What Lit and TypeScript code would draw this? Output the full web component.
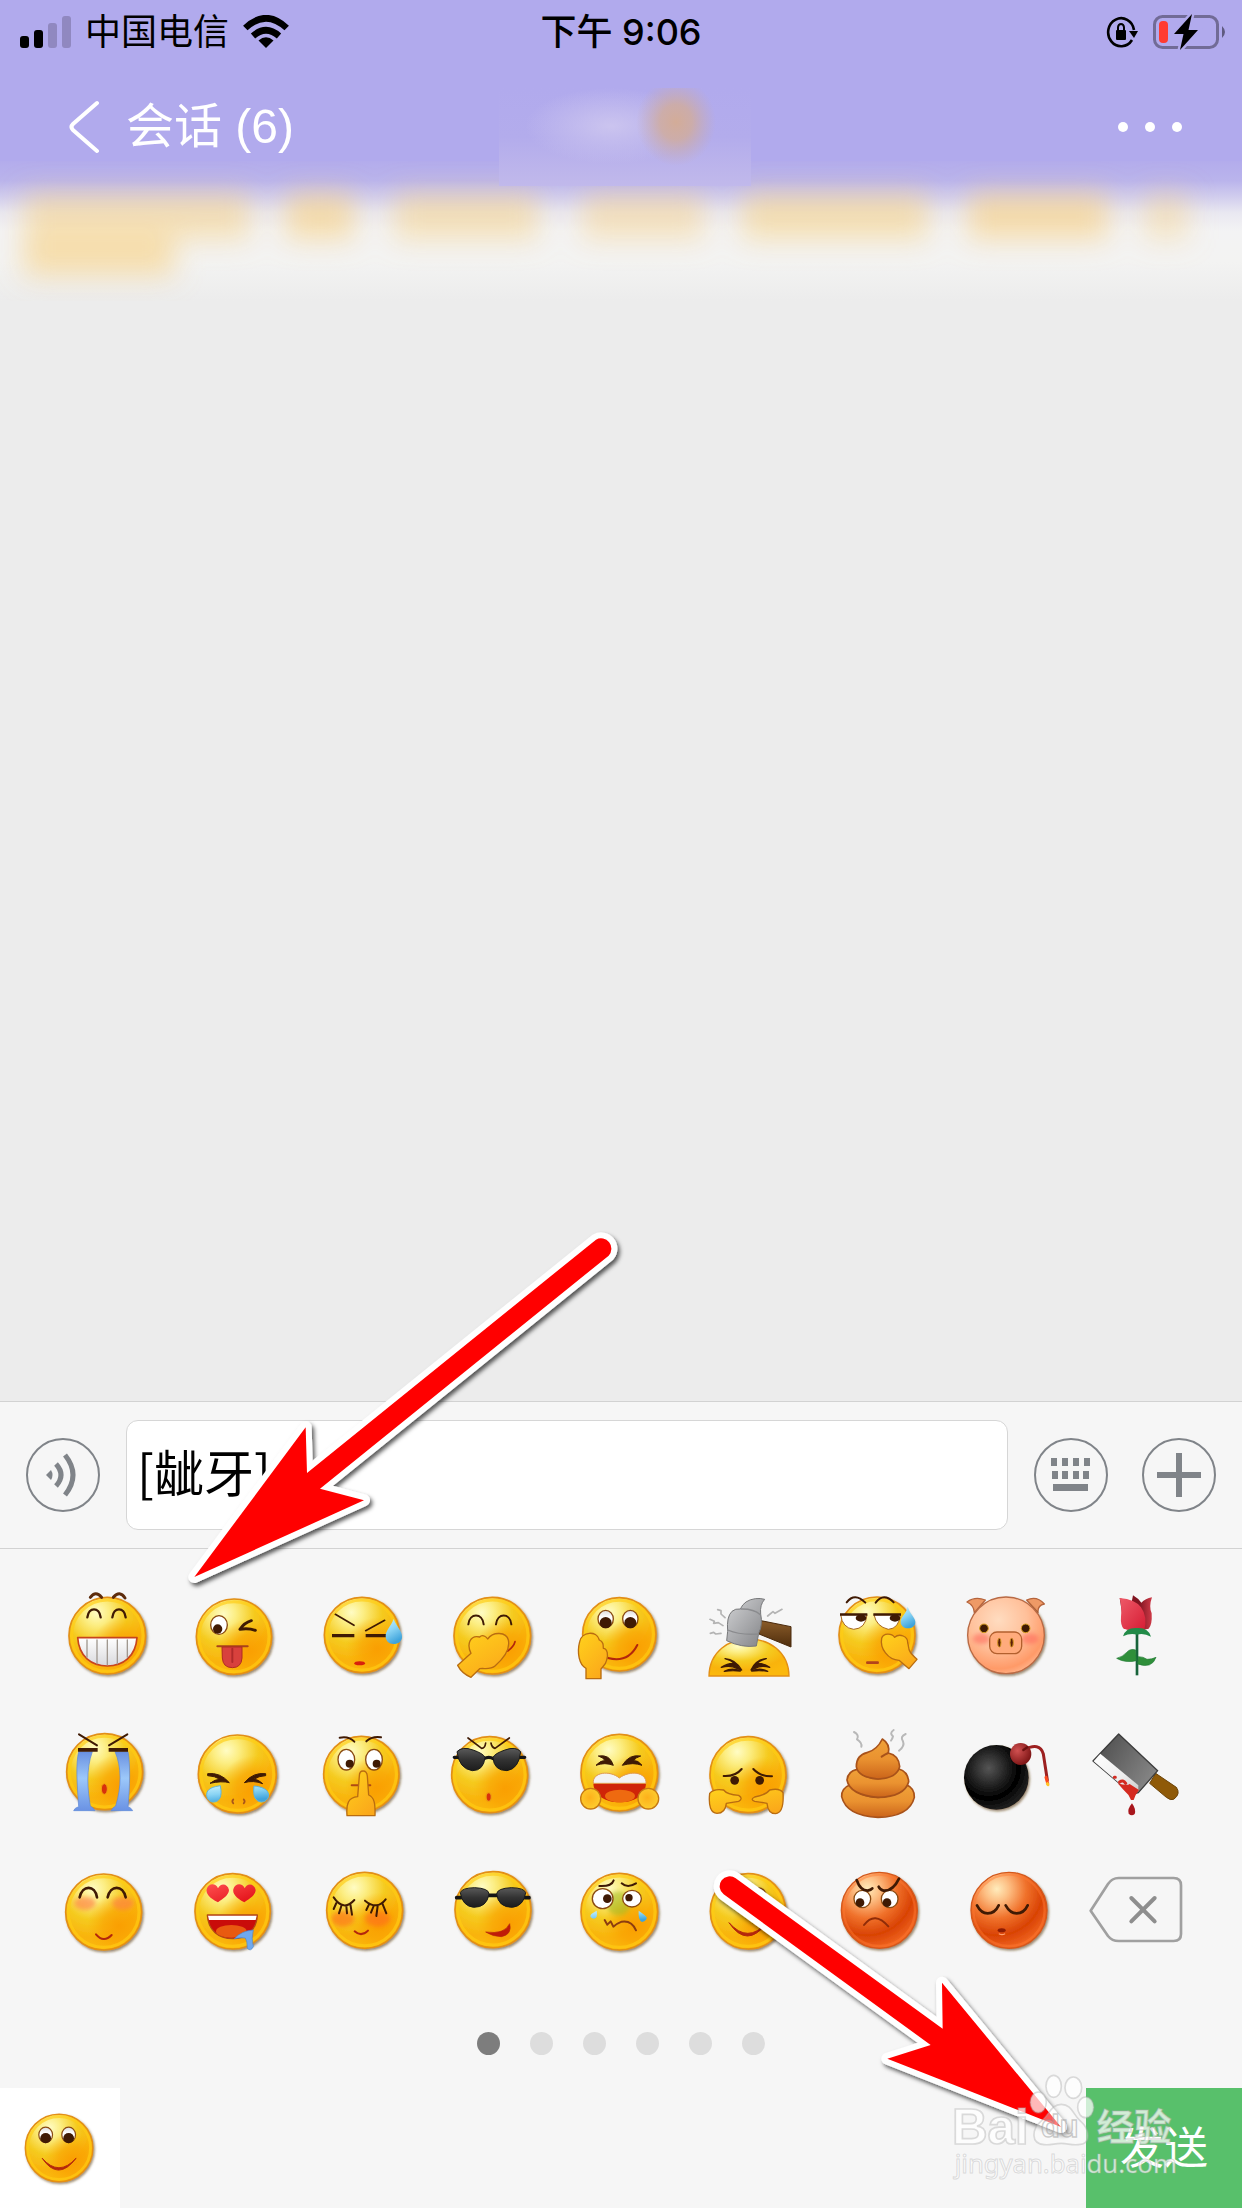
import { LitElement, html, svg, css } from "lit";
import { customElement, state } from "lit/decorators.js";

const INK = "#3f1a04";
const RED = "#b3260c";

const line = (d: string, w = 5, c = INK) =>
  svg`<path d=${d} fill="none" stroke=${c} stroke-width=${w + 1} stroke-linecap="round" stroke-linejoin="round"/>`;
const shape = (d: string, fill: string, stroke = "none", w = 4) =>
  svg`<path d=${d} fill=${fill} stroke=${stroke} stroke-width=${w} stroke-linejoin="round"/>`;
const oval = (x: number, y: number, rx: number, ry: number, fill: string, stroke = "none", w = 4) =>
  svg`<ellipse cx=${x} cy=${y} rx=${rx} ry=${ry} fill=${fill} stroke=${stroke} stroke-width=${w}/>`;
const eye = (x: number, y: number, rx: number, ry: number, px: number, py: number, pr = 12) =>
  svg`${oval(x, y, rx, ry, "#fff", "#8a4a10", 4)}${oval(px, py, pr, pr, INK)}`;
const lookEye = (x: number, y: number) =>
  svg`${oval(x, y, 23, 26, "url(#white)", "#8a4a10", 4)}${oval(x, y + 11, 18, 17, INK)}`;
const blush = (x: number, y: number, rx: number, ry: number, fill = "#ff7a4a") =>
  svg`<ellipse cx=${x} cy=${y} rx=${rx} ry=${ry} fill=${fill} opacity="0.6" filter="url(#soft)"/>`;

const ball = (x: number, y: number, r = 115) => svg`
  <circle cx=${x} cy=${y} r=${r - 2} fill="url(#skin)" stroke="#e38f14" stroke-width="5" filter="url(#drop-shade)"/>
  <circle cx=${x} cy=${y} r=${r - 4} fill="url(#warm)"/>
  <circle cx=${x} cy=${y} r=${r - 10} fill="none" stroke="#ffcc14" stroke-width="9" opacity="0.65"/>`;
const redBall = (x: number, y: number, r = 116) => svg`
  <circle cx=${x} cy=${y} r=${r - 2} fill="url(#anger)" stroke="#d4581c" stroke-width="4" filter="url(#drop-shade)"/>
  <circle cx=${x} cy=${y} r=${r - 9} fill="none" stroke="#ff7a34" stroke-width="7" opacity="0.45"/>`;
const HAND = "#b96c10";

const smile = svg`${ball(953, 1024)}${lookEye(908, 980)}${lookEye(985, 980)}
  ${shape("M896 1058Q950 1138 1010 1058Q952 1122 896 1058Z", RED, RED, 3)}`;

interface Emoji { name: string; box: string; art: unknown; }

const COLS = [55, 441, 827, 43, 429, 815, 61, 447, 833];
const ROWS = [51, 465, 879];

const art: [string, unknown][] = [
  ["龇牙", svg`${ball(203, 197, 117)}
    ${line("M152 82Q168 60 186 82M221 82Q240 60 256 84", 8, "#5d2c0c")}
    ${line("M143 142C147 110 179 110 183 142M218 142C222 110 254 110 258 142", 6)}
    ${shape("M114 203H292C288 260 250 288 203 288C155 288 118 260 114 203Z", "url(#teeth)", "#c8441c", 5)}
    ${line("M142 210V262M172 210V281M203 210V284M233 210V281M263 210V262", 3, "#a09890")}`],
  ["调皮", svg`${ball(582, 200)}${eye(537, 165, 25, 28, 533, 177, 14)}
    ${line("M634 152Q613 158 600 178Q625 174 646 181", 8)}${line("M532 229H623", 5, "#a8431a")}
    ${shape("M546 231H606V264Q604 293 577 293Q549 293 547 264Z", "#d8413d", "#b02a22", 3)}${line("M577 236V276", 5, "#b02a2a")}`],
  ["流汗", svg`${ball(965, 195)}${line("M885 133L941 166M1033 151L976 182", 4)}
    ${shape("M875 192H942V202H875ZM976 192H1040V202H976Z", INK)}${oval(958, 280, 16, 6, "#d8200c")}
    ${shape("M1060 147C1070 172 1085 182 1085 200C1085 214 1074 222 1060 222C1046 222 1036 213 1036 198C1036 182 1051 170 1060 147Z", "url(#water)")}`],
  ["偷笑", svg`${ball(188, 197, 117)}${line("M116 163C120 128 158 128 162 163M199 163C203 128 241 128 245 163", 5)}
    ${line("M234 243Q252 230 256 215", 4, RED)}
    ${shape("M84 286L124 250C110 222 122 194 150 201C160 190 172 204 174 207C190 184 230 185 236 210C243 240 222 265 196 288C182 300 165 294 150 296L124 322C108 315 92 302 84 286Z", "url(#hand)", HAND)}`],
  ["再见", svg`${ball(568, 193, 112)}${lookEye(527, 147)}${lookEye(601, 147)}${line("M534 264Q594 280 622 225", 5, RED)}
    ${shape("M468 326V295C448 285 440 250 449 215C455 185 500 180 508 210C520 215 520 225 520 235C533 235 535 258 530 270C528 285 515 293 513 297V326Z", "url(#hand)", HAND)}`],
  ["敲打", svg`<path d="M836 318C838 170 1074 170 1076 318Z" fill="url(#skin)" stroke="#e38f14" stroke-width="4"/>
    ${shape("M884 266Q915 268 934 300L920 295Q900 285 873 292Q895 278 914 281Q900 270 884 266ZM882 304Q905 292 930 303Q905 300 882 304Z", INK, INK, 4)}
    ${shape("M1008 266Q977 268 962 300L974 295Q992 285 1018 292Q998 278 978 281Q992 270 1008 266ZM1012 304Q990 292 964 303Q990 300 1012 304Z", INK, INK, 4)}
    ${shape("M992 152L1082 170V231L986 192Z", "url(#wood)", "#4a2a0c", 3)}
    ${shape("M930 117Q942 90 975 86Q990 84 1003 88Q988 104 991 132Q998 165 985 190L978 228Q935 234 889 212L892 184Q888 140 905 124Q915 115 930 117Z", "url(#steel)", "#77787a", 3)}
    ${line("M892 180Q930 196 984 192M932 117Q970 116 990 134", 3, "#8a8b8e")}
    ${line("M862 119L872 122L872 132L884 143M839 148L852 154L850 160L864 158L878 167M840 190L850 187L856 192L872 190M1012 138L1028 125L1034 130L1055 118", 4, "#b4b4b4")}`],
  ["擦汗", svg`${ball(202, 195, 116)}${line("M111 97Q135 66 167 98M198 98Q222 66 252 97", 5)}
    ${shape("M93 134H172Q168 176 132 178Q98 174 93 134Z", "#fff", "#a8671a", 3)}${shape("M193 134H272Q268 176 236 178Q200 170 193 134Z", "#fff", "#a8671a", 3)}
    ${oval(154, 144, 16, 11, INK)}${oval(256, 144, 16, 11, INK)}${shape("M91 130H173V137H91ZM191 130H274V137H191Z", INK)}
    ${shape("M294 110C302 135 317 142 317 156C317 168 307 175 295 175C282 175 273 167 273 155C273 140 289 133 294 110Z", "url(#water)")}
    ${line("M173 278H204", 7, "#b3441a")}
    ${shape("M322 268L298 296L268 271C235 270 210 235 216 205C222 188 246 190 255 202C270 188 295 200 294 218C300 236 290 240 322 268Z", "url(#hand)", HAND)}`],
  ["猪头", svg`${shape("M526 90Q495 78 471 96Q492 106 493 128ZM650 90Q680 76 703 102Q682 106 684 128Z", "#ee9a66", "#b5643c", 4)}
    <circle cx="588" cy="196" r="115" fill="url(#pig)" stroke="#b96a44" stroke-width="4" filter="url(#drop-shade)"/>
    ${blush(514, 206, 26, 16, "#ff6a5c")}${blush(660, 206, 26, 16, "#ff6a5c")}
    ${oval(522, 175, 13, 13, INK, "#d9a020", 3)}${oval(647, 175, 13, 13, INK, "#d9a020", 3)}
    <rect x="539" y="186" width="96" height="65" rx="22" fill="#ffab7c" stroke="#b3602e" stroke-width="4"/>
    ${oval(568, 218, 5, 13, "#5a1e08", "#d99a20", 3)}${oval(605, 218, 5, 13, "#5a1e08", "#d99a20", 3)}`],
  ["玫瑰", svg`${shape("M976 190H984V316H976Z", "#17633a")}
    ${shape("M928 84Q950 92 964 96L968 76Q985 86 993 98Q1005 86 1025 82Q1015 110 1024 130Q1026 165 1015 176Q980 186 942 176Z", "url(#rosedark)")}
    ${shape("M928 84Q975 88 992 112Q1012 140 1002 180Q970 186 940 176Q930 165 932 140Q935 110 928 84Z", "url(#rose)")}
    ${shape("M938 199Q946 172 980 174Q1014 172 1022 200Q1000 188 980 194Q960 188 938 199Z", "#228b48")}
    ${shape("M978 272Q945 280 919 265Q938 260 948 248Q960 234 976 240ZM984 260Q1000 260 1010 268Q1025 268 1037 262Q1025 297 982 282Z", "#2f8f3a", "#1f7a34", 2)}`],
  ["大哭", svg`${ball(195, 605, 116)}
    ${shape("M117 545H158C138 600 144 660 152 708Q162 714 166 722H102Q104 714 117 710C112 640 108 580 117 545Z", "url(#tears)", "#5a86d8", 2)}
    ${shape("M226 545H265C272 580 271 650 265 710Q276 714 279 722H214Q220 712 228 708C246 650 246 590 226 545Z", "url(#tears)", "#5a86d8", 2)}
    ${shape("M115 534H174V545H115ZM207 534H265V545H207Z", INK)}${line("M118 493L172 526M263 493L208 526", 5)}
    ${oval(194, 657, 9, 16, "#d8300c", "#f0a010", 3)}`],
  ["流泪", svg`${ball(592, 612, 119)}
    ${shape("M503 611Q540 606 568 638Q545 632 510 640Q525 628 540 628Q525 618 503 617ZM677 611Q640 606 613 638Q640 630 668 641Q655 628 642 628Q655 618 677 617Z", INK, INK, 3)}
    ${shape("M541 647C522 650 500 655 500 674C500 688 510 696 520 696C538 696 548 680 541 647ZM642 648C665 650 686 658 686 676C684 690 674 696 664 696C646 694 638 678 642 648Z", "url(#water)", "#5fb4dc", 3)}
    ${line("M580 688Q574 694 580 700M611 688Q617 694 611 700", 4, "#a8551a")}`],
  ["嘘", svg`${ball(963, 612, 115)}${line("M898 503Q925 497 942 515M978 514Q995 498 1022 502", 5)}
    ${eye(918, 569, 25, 31, 928, 581)}${eye(1001, 569, 25, 31, 1009, 581)}${line("M934 646H990", 5, "#b04a14")}
    ${shape("M957 618C957 598 979 598 981 618L985 675C1002 682 1005 700 1004 737H920C917 700 925 682 952 680Z", "url(#hand)", HAND)}`],
  ["酷拽", svg`${ball(180, 614, 116)}${line("M115 504L156 535Q166 535 168 519M239 504L196 535Q186 532 184 519", 4)}
    ${line("M74 562H88M163 566Q177 558 192 566M270 562H285", 9, "#151515")}
    ${shape("M82 545Q98 528 130 540Q160 550 166 562Q162 602 128 602Q88 596 82 545ZM273 545Q258 528 226 540Q196 550 190 562Q192 602 232 602Q268 596 273 545Z", "url(#shades)", "#1a1a1a", 3)}
    ${oval(177, 681, 8, 13, "#d8300c", "#f0a010", 4)}`],
  ["大叫", svg`${ball(568, 608, 117)}
    ${shape("M505 558Q540 552 550 586Q525 576 498 586Q512 570 526 572Q518 562 505 558ZM632 558Q597 552 577 586Q610 576 636 586Q624 570 610 572Q618 562 632 558Z", INK, INK, 3)}
    ${shape("M490 640H648C646 680 610 697 568 697C530 697 492 680 490 640Z", "#cf2408")}${oval(570, 678, 45, 19, "#ee6a10")}
    ${shape("M490 640C486 606 540 600 568 624C600 600 650 606 648 640Z", "#f3f3f3", "#e09a50", 3)}
    ${oval(482, 686, 30, 31, "url(#fist)", "#c67812", 4)}${oval(655, 686, 31, 31, "url(#fist)", "#c67812", 4)}`],
  ["对手指", svg`${ball(953, 614, 116)}${line("M880 618Q915 620 934 597M969 597Q990 620 1025 619", 5)}
    ${oval(913, 631, 13, 13, INK)}${oval(988, 631, 13, 13, INK)}
    ${shape("M838 670Q850 655 880 660Q890 674 925 676Q940 686 925 694Q905 697 888 700Q885 730 860 730Q832 728 838 670ZM1058 668Q1048 653 1018 660Q1008 674 973 681Q958 688 973 694Q996 697 1010 700Q1013 731 1036 731Q1062 728 1058 668Z", "url(#hand)", HAND)}`],
  ["便便", svg`${shape("M96 680Q95 655 120 645Q150 682 205 682Q265 680 292 645Q315 655 314 682Q300 740 205 742Q110 738 96 680Z", "url(#poo)", "#a8521a", 5)}
    ${shape("M112 630Q115 603 142 598Q165 627 205 627Q250 622 268 597Q295 605 297 635Q285 680 205 682Q120 675 112 630Z", "url(#poo)", "#a8521a", 5)}
    ${shape("M140 590Q140 556 172 548Q202 540 218 507Q242 522 236 549Q268 556 270 590Q262 625 205 627Q145 622 140 590Z", "url(#poo)", "#a8521a", 5)}
    ${line("M236 549Q228 552 216 560", 5, "#a8521a")}
    ${line("M133 486Q150 495 142 508Q158 518 155 530M252 480Q238 490 250 499Q248 508 244 512M288 492Q270 500 280 514Q286 528 268 542", 5, "#b8b8b8")}`],
  ["炸弹", svg`<circle cx="559" cy="622" r="97" fill="url(#bomb)" filter="url(#drop-shade)"/>
    ${line("M640 540Q690 514 700 552L712 630", 8, "#9c2020")}${line("M708 622L713 640", 8, "#ff4a1c")}${line("M712 641L714 644", 8, "#ffc42a")}
    ${oval(632, 552, 32, 33, "url(#cap)")}${line("M640 540L652 532", 6, "#6d1010")}`],
  ["菜刀", svg`${shape("M1036 610L1098 652Q1112 672 1090 688Q1080 692 1068 682L1018 640Z", "#8f5a08", "#6b4206", 3)}
    ${shape("M925 492L1042 602L984 668L966 673L848 573Z", "url(#blade)", "#3c3c3c", 4)}
    ${shape("M870 551L984 646L984 664L966 673L850 574Z", "url(#edge)")}
    ${shape("M922 640Q950 648 958 642L986 660Q976 672 970 690H962Q955 672 940 660Z", "#d42a20")}
    ${line("M912 622H915M928 636Q938 628 946 640", 8, "#d42a20")}
    ${shape("M965 700Q978 718 973 732Q964 740 955 731Q950 718 965 700Z", "#a8161c")}`],
  ["愉快", svg`${ball(192, 1026, 116)}${blush(136, 1000, 32, 20)}${blush(250, 1000, 32, 20)}
    ${line("M120 982C128 944 166 944 172 982M204 982C212 944 250 944 258 982", 7)}${line("M169 1093Q192 1120 216 1095", 5, RED)}`],
  ["色", svg`${ball(578, 1024)}
    ${shape("M534 997C508 985 497 970 500 958C505 938 528 938 534 955C541 938 563 940 567 960C566 976 550 985 534 997ZM613 997C588 985 577 970 580 958C585 938 608 938 614 955C621 938 643 940 647 960C646 976 630 985 613 997Z", "url(#heart)")}
    ${shape("M502 1035H652C650 1080 620 1106 578 1106C535 1106 504 1080 502 1035Z", "#c90c0a", "#b04a14", 4)}
    ${oval(574, 1084, 46, 19, "#e85a10")}${shape("M504 1037H650L647 1050H507Z", "#fff")}
    ${shape("M583 1106Q605 1082 640 1080Q633 1105 640 1130Q632 1146 622 1135Q622 1112 616 1104Q600 1102 583 1106Z", "#6fa9ee", "#4a86d0", 2)}`],
  ["害羞", svg`${ball(973, 1021, 116)}${blush(908, 1046, 34, 24, "#ff6a1a")}${blush(1012, 1046, 38, 24, "#ff6a1a")}
    ${line("M880 982Q910 1026 942 990M888 999L880 1017M903 1008L896 1030M918 1008L920 1030M930 1002L935 1034M974 992Q1010 1022 1036 988M986 1003L978 1020M1000 1008L992 1028M1012 1008L1008 1038M1026 1000L1038 1030", 5)}
    ${line("M943 1084Q963 1102 983 1082", 5, RED)}`],
  ["得意", svg`${ball(190, 1019, 116)}${line("M81 983H94M176 976H202M286 983H298", 10, "#151515")}
    ${shape("M92 968Q96 954 135 953Q178 955 178 972Q172 1012 132 1012Q98 1008 92 968ZM288 968Q284 954 245 953Q202 955 201 972Q206 1012 248 1012Q282 1008 288 968Z", "url(#shades)", "#1a1a1a", 3)}
    ${shape("M168 1086Q225 1094 240 1061Q248 1094 215 1100Q190 1100 168 1086Z", "#c01c08", RED, 2)}`],
  ["难过", svg`${ball(568, 1025, 117)}${blush(566, 1000, 36, 36, "#a3ba20")}
    ${line("M508 948Q545 950 551 931M575 940Q592 956 618 940", 5)}
    ${eye(518, 986, 31, 30, 532, 986, 13)}${eye(606, 986, 28, 25, 597, 983, 11)}
    ${shape("M500 1022Q505 1046 490 1046Q476 1042 484 1032ZM626 1022Q624 1050 636 1056Q652 1052 650 1042Q645 1034 626 1022Z", "url(#water)")}
    ${line("M524 1050L532 1064L542 1054L550 1070Q562 1060 575 1055Q605 1050 618 1081", 5, "#8c3c10")}`],
  ["微笑", smile],
  ["发怒", svg`${redBall(209, 1021)}
    ${eye(158, 987, 25, 26, 151, 998, 13)}${eye(240, 987, 25, 26, 232, 998, 13)}
    ${line("M141 930Q152 962 174 962Q184 960 188 955M268 926Q250 964 222 962Q210 958 207 950", 7)}${line("M163 1065Q195 1022 236 1069", 5, "#8f2c08")}`],
  ["闭嘴", svg`${redBall(597, 1021)}${line("M501 1006Q513 1030 533 1030Q555 1030 566 1006M587 1006Q600 1030 620 1030Q642 1030 653 1006", 7)}
    ${oval(575, 1081, 12, 6, "#8c1c04")}${line("M568 1092Q576 1096 584 1092", 3, "#ffa070")}`],
];

const EMOJIS: Emoji[] = art.map(([name, drawing], i) => {
  const row = i < 9 ? 0 : i < 18 ? 1 : 2;
  return { name, art: drawing, box: `${COLS[i - row * 9]} ${ROWS[row]} 288 288` };
});

@customElement("app-root")
export class AppRoot extends LitElement {
  @state() private draft = "[龇牙]";
  @state() private page = 0;

  static styles = css`
    :host { display: block; font-family: Inter, "Noto Sans CJK SC", sans-serif; }
    * { box-sizing: border-box; }
    svg { display: block; flex: none; }
    button { border: 0; padding: 0; margin: 0; background: none; font: inherit; color: inherit; }
    .screen { display: flex; flex-direction: column; min-height: 100vh; background: #ececec; overflow: hidden; }
    .top { position: relative; background: #b1aaed; }
    .status { display: grid; grid-template-columns: 1fr auto 1fr; align-items: center; height: 64px; padding: 0 16px; font-size: 36px; line-height: 36px; color: #000; }
    .carrier { display: flex; align-items: center; gap: 14px; padding-left: 4px; }
    .time { font-weight: 500; }
    .power { display: flex; align-items: center; justify-content: flex-end; gap: 14px; }
    .nav { position: relative; z-index: 1; display: flex; align-items: center; justify-content: space-between; height: 126px; padding: 0 59px 0 68px; color: #fff; }
    .back { display: flex; align-items: center; gap: 26px; font-family: "Liberation Sans", "Noto Sans CJK SC", sans-serif; font-size: 48px; line-height: 56px; text-decoration: none; color: #fff; }
    .haze { position: absolute; left: 0; top: 161px; width: 100%; height: 140px; }
    .smudge { position: absolute; left: 50%; top: 88px; width: 252px; height: 98px; margin-left: -122px; }
    .chat { flex: 1; }
    .dock { position: relative; background: #f6f6f6; }
    .composer { display: flex; align-items: center; height: 148px; padding: 0 26px; border-top: 1px solid #d2d2d2; border-bottom: 1px solid #d2d2d2; }
    .draft { flex: 1; min-width: 0; height: 110px; margin: 0 26px; padding: 0 10px 10px; border: 1px solid #d6d6d6; border-radius: 12px; background: #fff; font-family: "Noto Sans CJK SC", sans-serif; font-size: 50px; color: #000; outline: 0; }
    .tools { display: flex; gap: 34px; }
    .grid { display: grid; grid-template-columns: repeat(9, 1fr); grid-auto-rows: 138px; padding: 17px 42px 0; }
    .cell { display: grid; place-items: center; }
    .pages { display: flex; justify-content: center; gap: 30px; padding: 52px 0 33px; }
    .dot { width: 23px; height: 23px; border-radius: 50%; background: #dddddd; }
    .dot.on { background: #7d7d7d; }
    .tabs { display: flex; justify-content: space-between; height: 120px; }
    .tab { display: grid; place-items: center; width: 120px; background: #fff; }
    .send { width: 156px; background: #58c06b; color: #fff; font-size: 44px; line-height: 60px; }
    .overlay { position: absolute; pointer-events: none; overflow: visible; }
    .from-chat { left: 160px; top: -191px; }
    .to-send { right: 142px; bottom: 58px; }
    .mark { right: 0; bottom: 0; }
    .mark-en { font-family: "Liberation Sans", sans-serif; font-weight: 700; font-size: 148px; }
    .mark-du { font-family: "Liberation Sans", sans-serif; font-weight: 700; font-size: 92px; }
    .mark-zh { font-family: "Noto Sans CJK SC", sans-serif; font-weight: 700; font-size: 112px; }
    .mark-url { font-family: "Noto Sans", sans-serif; font-size: 77px; }
  `;

  private defs() {
    return html`<svg width="0" height="0" class="overlay" aria-hidden="true"><defs>
      <radialGradient id="skin" cx="0.36" cy="0.2" r="0.8"><stop offset="0" stop-color="#fffcc4"/><stop offset="0.2" stop-color="#fcee84"/><stop offset="0.5" stop-color="#f5cb20"/><stop offset="0.8" stop-color="#f9b30c"/><stop offset="1" stop-color="#fbb80c"/></radialGradient>
      <radialGradient id="warm" cx="0.7" cy="0.68" r="0.42"><stop offset="0" stop-color="#fa9c00" stop-opacity="0.9"/><stop offset="0.5" stop-color="#fa9f00" stop-opacity="0.6"/><stop offset="1" stop-color="#fba800" stop-opacity="0"/></radialGradient>
      <radialGradient id="anger" cx="0.34" cy="0.22" r="0.8"><stop offset="0" stop-color="#ffecbc"/><stop offset="0.2" stop-color="#fdbf84"/><stop offset="0.48" stop-color="#f0722c"/><stop offset="0.76" stop-color="#d94304"/><stop offset="1" stop-color="#f06420"/></radialGradient>
      <radialGradient id="pig" cx="0.4" cy="0.3" r="0.75"><stop offset="0" stop-color="#ffdcc0"/><stop offset="0.5" stop-color="#ffc09a"/><stop offset="0.85" stop-color="#ff9a68"/><stop offset="1" stop-color="#ffb890"/></radialGradient>
      <radialGradient id="bomb" cx="0.38" cy="0.36" r="0.62"><stop offset="0" stop-color="#555"/><stop offset="0.5" stop-color="#1c1c1c"/><stop offset="0.75" stop-color="#000"/><stop offset="1" stop-color="#1a1a1a"/></radialGradient>
      <radialGradient id="cap" cx="0.35" cy="0.35" r="0.7"><stop offset="0" stop-color="#d05050"/><stop offset="1" stop-color="#7c1414"/></radialGradient>
      <radialGradient id="fist" cx="0.45" cy="0.45" r="0.6"><stop offset="0" stop-color="#fdb01a"/><stop offset="1" stop-color="#fdcf30"/></radialGradient>
      <linearGradient id="hand" x1="0" y1="0" x2="0.7" y2="1"><stop offset="0" stop-color="#ffd21c"/><stop offset="1" stop-color="#fba91a"/></linearGradient>
      <linearGradient id="teeth" x1="0" y1="0" x2="0" y2="1"><stop offset="0" stop-color="#fff"/><stop offset="1" stop-color="#d9d9dd"/></linearGradient>
      <linearGradient id="white" x1="0" y1="0" x2="0" y2="1"><stop offset="0" stop-color="#ddd"/><stop offset="0.4" stop-color="#fff"/></linearGradient>
      <linearGradient id="water" x1="0" y1="0" x2="0.4" y2="1"><stop offset="0" stop-color="#c8f0fc"/><stop offset="0.5" stop-color="#8ad4f4"/><stop offset="1" stop-color="#3fa4dc"/></linearGradient>
      <linearGradient id="tears" x1="0" y1="0" x2="0" y2="1"><stop offset="0" stop-color="#6a90e0"/><stop offset="0.45" stop-color="#9cc8fa"/><stop offset="1" stop-color="#6a92e4"/></linearGradient>
      <linearGradient id="shades" x1="0" y1="0" x2="0" y2="1"><stop offset="0" stop-color="#5a5a5a"/><stop offset="0.5" stop-color="#333"/><stop offset="1" stop-color="#1c1c1c"/></linearGradient>
      <linearGradient id="steel" x1="0" y1="0" x2="1" y2="1"><stop offset="0" stop-color="#d2d3d5"/><stop offset="0.6" stop-color="#a2a3a6"/><stop offset="1" stop-color="#808184"/></linearGradient>
      <linearGradient id="wood" x1="0" y1="0" x2="0" y2="1"><stop offset="0" stop-color="#8a5c2a"/><stop offset="1" stop-color="#4f2d0c"/></linearGradient>
      <linearGradient id="poo" x1="0" y1="0" x2="0" y2="1"><stop offset="0" stop-color="#f0a238"/><stop offset="0.5" stop-color="#ea9230"/><stop offset="1" stop-color="#cb641a"/></linearGradient>
      <linearGradient id="blade" x1="0" y1="0" x2="1" y2="0.6"><stop offset="0" stop-color="#484848"/><stop offset="1" stop-color="#858585"/></linearGradient>
      <linearGradient id="edge" x1="0" y1="0" x2="1" y2="1"><stop offset="0" stop-color="#fff"/><stop offset="0.6" stop-color="#eee"/><stop offset="1" stop-color="#c9c9c9"/></linearGradient>
      <linearGradient id="rose" x1="0" y1="0" x2="1" y2="1"><stop offset="0" stop-color="#ee5a68"/><stop offset="1" stop-color="#d61c34"/></linearGradient>
      <linearGradient id="rosedark" x1="0" y1="0" x2="1" y2="0"><stop offset="0" stop-color="#8c1420"/><stop offset="0.6" stop-color="#7e1420"/><stop offset="1" stop-color="#d03a48"/></linearGradient>
      <linearGradient id="heart" x1="0" y1="0" x2="1" y2="1"><stop offset="0" stop-color="#ff5050"/><stop offset="1" stop-color="#e00c14"/></linearGradient>
      <filter id="drop-shade" x="-20%" y="-20%" width="140%" height="140%"><feDropShadow dx="4" dy="5" stdDeviation="3" flood-color="#5a3a10" flood-opacity="0.6"/></filter>
      <filter id="soft" x="-50%" y="-50%" width="200%" height="200%"><feGaussianBlur stdDeviation="7"/></filter>
      <filter id="arrow-shade" x="-10%" y="-10%" width="120%" height="120%"><feDropShadow dx="7" dy="9" stdDeviation="6" flood-color="#000" flood-opacity="0.65"/></filter>
    </defs></svg>`;
  }

  private statusBar() {
    return html`<div class="status">
      <div class="carrier">
        <svg width="51" height="32" viewBox="0 0 51 32" aria-hidden="true">
          <rect y="20" width="9" height="12" rx="3"/><rect x="14" y="14" width="9" height="18" rx="3"/>
          <g fill="#9088c0"><rect x="28" y="7" width="9" height="25" rx="3"/><rect x="42" width="9" height="32" rx="3"/></g>
        </svg>
        <span>中国电信</span>
        <svg width="46" height="34" viewBox="0 0 46 34" aria-hidden="true">
          <path d="M23 33L15.500 25.500Q23 19 30.500 25.500Z"/>
          <g fill="none" stroke="#000" stroke-width="6.500"><path d="M10 21Q23 9.500 36 21"/><path d="M2.300 13Q23-6.500 43.700 13"/></g>
        </svg>
      </div>
      <span class="time">下午 9:06</span>
      <div class="power">
        <svg width="32" height="32" viewBox="0 0 32 32" aria-hidden="true">
          <path d="M28 14A13 14 0 1 0 26 24" fill="none" stroke="#000" stroke-width="2.600"/>
          <path d="M23 15H32L28 22Z"/><rect x="10" y="14" width="10" height="10" rx="1"/>
          <path d="M12 15V11.500A3 3.500 0 0 1 18 11.500V15" fill="none" stroke="#000" stroke-width="2"/>
        </svg>
        <svg width="74" height="36" viewBox="0 0 74 36" aria-hidden="true">
          <rect x="2.500" y="2.500" width="63" height="31" rx="8" fill="none" stroke="#716b96" stroke-width="3"/>
          <path d="M70 12Q76 18 70 24Z" fill="#5f5a80"/>
          <rect x="7" y="7" width="9" height="22" rx="4" fill="#ff3b30"/>
          <path d="M40 0L22 20H31.500L28 36L46 16H36.500Z" stroke="#b1aaed" stroke-width="5" paint-order="stroke"/>
        </svg>
      </div>
    </div>`;
  }

  private notice() {
    const words: [number, number, number][] = [[24, 226, 0.52], [286, 68, 0.6], [394, 144, 0.5], [582, 122, 0.45], [742, 186, 0.55], [968, 140, 0.62], [1144, 44, 0.42]];
    return html`<svg class="haze" viewBox="0 0 1242 140" preserveAspectRatio="none" aria-hidden="true">
      <defs>
        <linearGradient id="fade" x1="0" y1="0" x2="0" y2="1">
          <stop offset="0" stop-color="#b3acec"/><stop offset="0.14" stop-color="#bab4ec"/><stop offset="0.26" stop-color="#d2ceee"/><stop offset="0.37" stop-color="#e9e8f1"/><stop offset="0.5" stop-color="#f3f3f4"/><stop offset="0.72" stop-color="#f3f3f2"/><stop offset="1" stop-color="#ececec"/>
        </linearGradient>
        <filter id="smear" x="-60%" y="-60%" width="220%" height="220%"><feGaussianBlur stdDeviation="14"/></filter>
      </defs>
      <rect width="1242" height="140" fill="url(#fade)"/>
      <g filter="url(#smear)" fill="#f8cf7c">
        ${words.map(([x, w, o]) => svg`<rect x=${x} y="32" width=${w} height="46" opacity=${o}/>`)}
        <rect x="24" y="78" width="150" height="36" opacity="0.6"/>
      </g>
    </svg>
    <svg class="smudge" viewBox="0 0 252 98" aria-hidden="true">
      <defs>
        <linearGradient id="veil" x1="0" y1="0" x2="0" y2="1"><stop offset="0" stop-color="#b1aaed"/><stop offset="0.5" stop-color="#b3acec"/><stop offset="1" stop-color="#c1b9eb"/></linearGradient>
        <radialGradient id="pale"><stop offset="0" stop-color="#cbc4ef"/><stop offset="1" stop-color="#cbc4ef" stop-opacity="0"/></radialGradient>
        <radialGradient id="peach"><stop offset="0" stop-color="#d3ac98"/><stop offset="0.4" stop-color="#d0ac9e" stop-opacity="0.85"/><stop offset="1" stop-color="#c6aab4" stop-opacity="0"/></radialGradient>
      </defs>
      <rect width="252" height="98" fill="url(#veil)"/>
      <ellipse cx="112" cy="38" rx="86" ry="38" fill="url(#pale)"/>
      <ellipse cx="177" cy="34" rx="40" ry="44" fill="url(#peach)"/>
    </svg>`;
  }

  private arrow(d: string) {
    return svg`<g filter="url(#arrow-shade)"><path d=${d} fill="#f00" stroke="#fff" stroke-width="36" stroke-linejoin="round" paint-order="stroke"/></g>`;
  }

  private watermark() {
    return html`<svg class="overlay mark" width="342" height="248" viewBox="0 0 1026 744" aria-hidden="true">
      <g fill="#fff" fill-opacity="0.72" stroke="#aaa" stroke-opacity="0.4" stroke-width="5">
        <ellipse cx="461" cy="379" rx="23" ry="33"/><ellipse cx="520" cy="383" rx="25" ry="32"/>
        <ellipse cx="415" cy="427" rx="24" ry="31"/><ellipse cx="557" cy="442" rx="24" ry="31"/>
        <path fill-opacity="0.35" d="M484 433C515 433 520 465 540 482C570 508 576 552 535 554C510 556 505 550 484 550C462 550 455 556 432 554C392 550 394 508 425 482C448 465 452 433 484 433Z"/>
        <text class="mark-en" x="156" y="551">Bai</text>
        <text class="mark-zh" x="590" y="542">经验</text>
        <text class="mark-url" x="164" y="640" stroke-width="3">jingyan.baidu.com</text>
      </g>
      <text class="mark-du" x="423" y="530" fill="#fff" fill-opacity="0.2" stroke="#999" stroke-opacity="0.5" stroke-width="4">du</text>
    </svg>`;
  }

  render() {
    return html`${this.defs()}
    <main class="screen">
      <header class="top">
        ${this.statusBar()}
        ${this.notice()}
        <nav class="nav">
          <a class="back" href="#chats">
            <svg width="32" height="54" viewBox="0 0 32 54" aria-hidden="true"><path d="M29 3L5 24Q2 27 5 30L29 51" fill="none" stroke="#fff" stroke-width="4" stroke-linecap="round"/></svg>
            <span>会话 (6)</span>
          </a>
          <button aria-label="更多"><svg width="66" height="12" viewBox="0 0 66 12" fill="#fff" aria-hidden="true"><circle cx="6" cy="6" r="5"/><circle cx="33" cy="6" r="5"/><circle cx="60" cy="6" r="5"/></svg></button>
        </nav>
      </header>
      <section class="chat" aria-label="消息"></section>
      <section class="dock">
        <div class="composer">
          <button aria-label="语音"><svg width="74" height="74" viewBox="0 0 74 74" aria-hidden="true">
            <g fill="none" stroke="#808489"><circle cx="37" cy="37" r="36" stroke-width="2"/><path d="M30 26Q40 37 30 48M39 17Q55 37 39 57" stroke-width="5"/></g>
            <path d="M25 32L20 37L25 42Q28 37 25 32Z" fill="#808489"/></svg></button>
          <input class="draft" aria-label="输入消息" .value=${this.draft} @input=${(e: Event) => (this.draft = (e.target as HTMLInputElement).value)}>
          <div class="tools">
            <button aria-label="键盘"><svg width="74" height="74" viewBox="0 0 74 74" fill="#808489" aria-hidden="true">
              <circle cx="37" cy="37" r="36" fill="none" stroke="#808489" stroke-width="2"/>
              ${[17, 28, 39, 50].map((x) => svg`<rect x=${x} y="20" width="6" height="8"/>`)}
              ${[18, 28, 39, 49].map((x) => svg`<rect x=${x} y="33" width="6" height="8"/>`)}
              <rect x="19" y="46" width="35" height="7"/></svg></button>
            <button aria-label="更多功能"><svg width="74" height="74" viewBox="0 0 74 74" fill="#808489" aria-hidden="true">
              <circle cx="37" cy="37" r="36" fill="none" stroke="#808489" stroke-width="2"/>
              <path d="M34 15H40V34H59V40H40V59H34V40H15V34H34Z"/></svg></button>
          </div>
        </div>
        <div class="grid">
          ${EMOJIS.map((e) => html`<button class="cell" aria-label=${e.name} @click=${() => (this.draft += `[${e.name}]`)}>
            <svg width="96" height="96" viewBox=${e.box} aria-hidden="true">${e.art}</svg></button>`)}
          <button class="cell" aria-label="删除" @click=${() => (this.draft = this.draft.replace(/(\[[^\]]*\]|.)$/, ""))}>
            <svg width="96" height="96" viewBox="833 879 288 288" fill="none" stroke-linejoin="round" stroke-linecap="round" aria-hidden="true">
              <path d="M925 924H1090Q1112 924 1112 946V1092Q1112 1113 1090 1113H925Q905 1113 893 1098L841 1022L893 942Q905 924 925 924Z" stroke="#a0a0a0" stroke-width="8"/>
              <path d="M963 984L1033 1054M1033 984L963 1054" stroke="#8e8e8e" stroke-width="12"/></svg></button>
        </div>
        <div class="pages">
          ${[0, 1, 2, 3, 4, 5].map((i) => html`<button class="dot ${i === this.page ? "on" : ""}" aria-label="第${i + 1}页" @click=${() => (this.page = i)}></button>`)}
        </div>
        <div class="tabs">
          <button class="tab" aria-label="表情"><svg width="86" height="86" viewBox="812 880 288 288" aria-hidden="true">${smile}</svg></button>
          <button class="send">发送</button>
        </div>
        <svg class="overlay from-chat" width="480" height="400" viewBox="0 0 1440 1200" aria-hidden="true">${this.arrow("M103 1101L437 652L441 789L1308 89A31 31 0 0 1 1346 137L480 836L612 871Z")}</svg>
        <svg class="overlay to-send" width="400" height="300" viewBox="0 0 1200 900" aria-hidden="true">${this.arrow("M1083 831L726 398L728 536L107 85A30 30 0 0 0 71 133L692 585L562 626Z")}</svg>
        ${this.watermark()}
      </section>
    </main>`;
  }
}
